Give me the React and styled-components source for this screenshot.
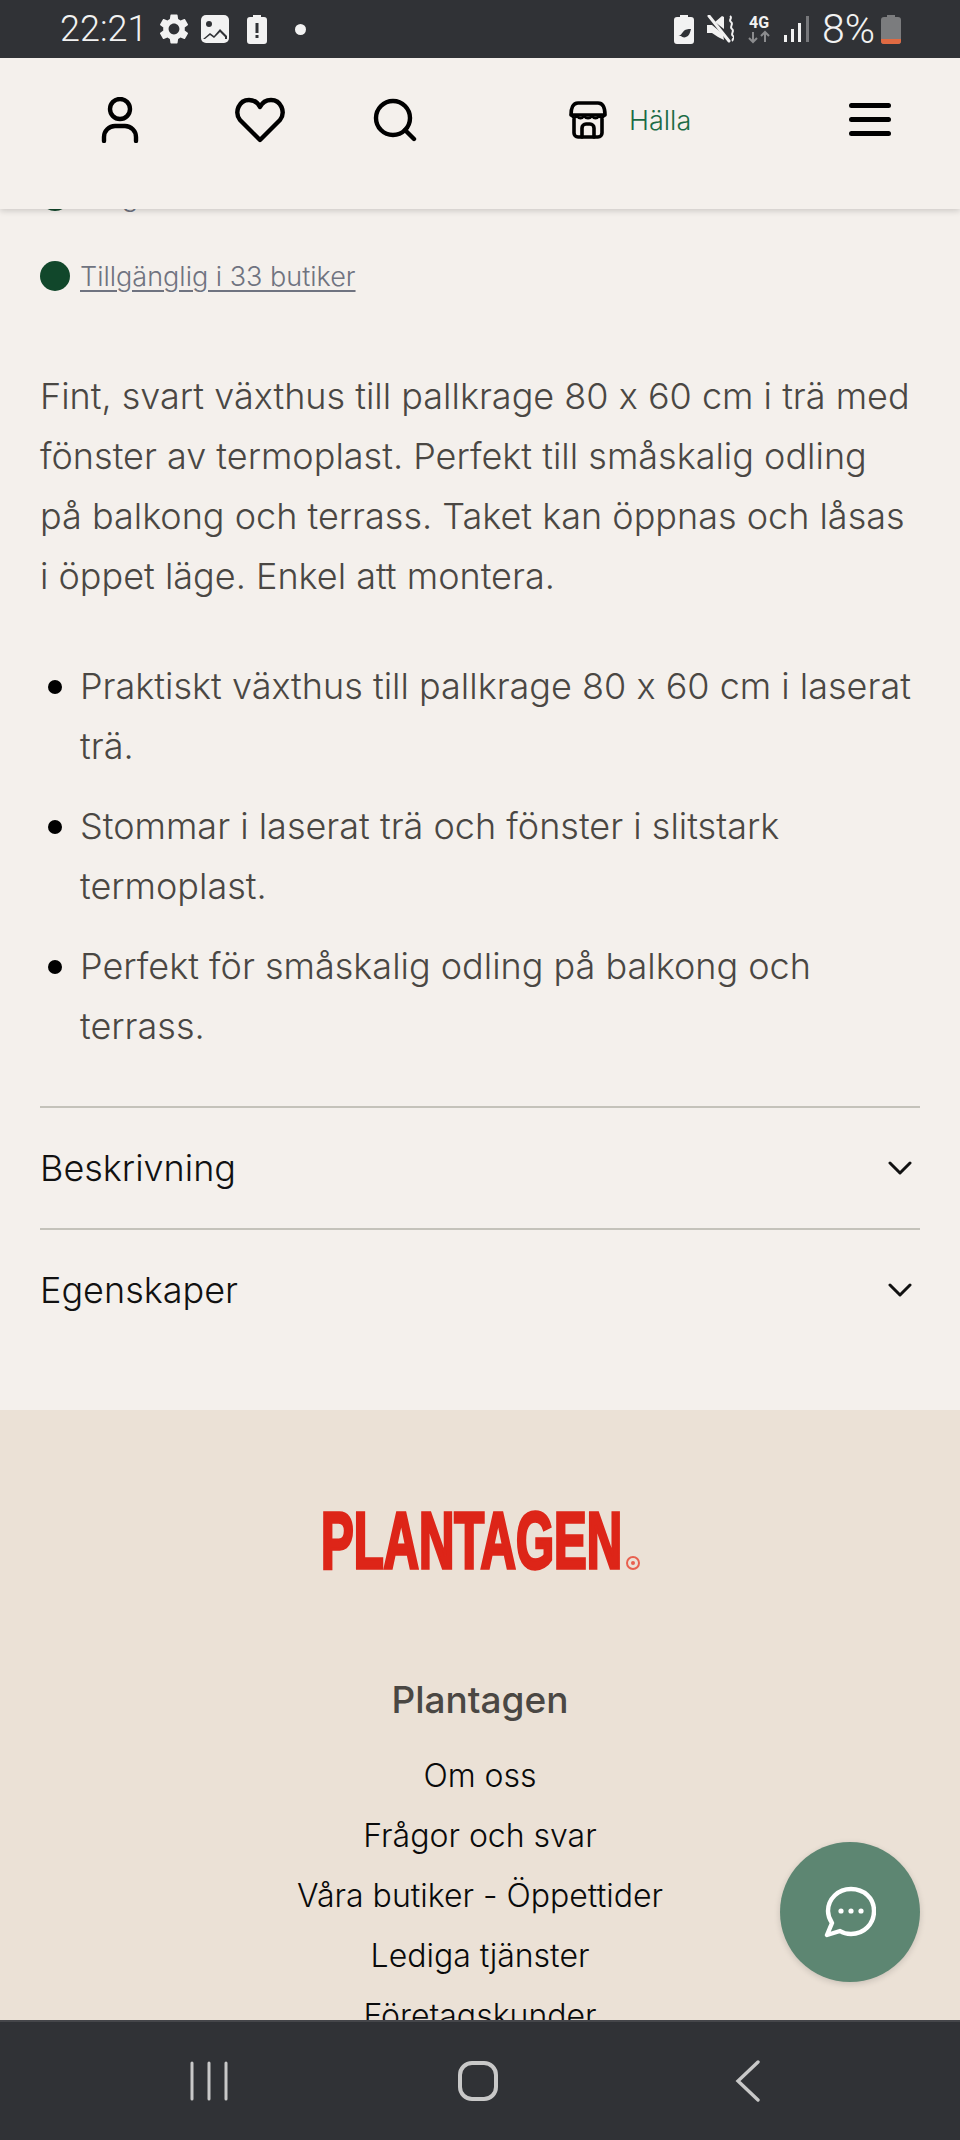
import React from "react";
import styled, { createGlobalStyle } from "styled-components";
import { MdSettings } from "react-icons/md";

const Global = createGlobalStyle`
  html, body { margin: 0; padding: 0; background: #f4f0ec; }
  * { box-sizing: border-box; }
`;
const Page = styled.div`
  position: relative; width: 960px; height: 2140px; overflow: hidden;
  display: flex; flex-direction: column; background: #f4f0ec;
  font-family: Inter, "Noto Sans", sans-serif; font-weight: 300; font-feature-settings: "calt" 0;
`;
const StatusBar = styled.div`
  height: 58px; flex: none; background: #303236; color: #f2f2f2;
  display: flex; align-items: center; justify-content: space-between;
  padding: 0 59px 0 60px; position: relative; z-index: 3;
`;
const StatusGroup = styled.div`display: flex; align-items: center; gap: ${p => p.$gap || 13}px;`;
const StatusText = styled.span`font-family: Roboto, Inter, sans-serif; font-size: ${p => p.$size || 36}px; font-weight: 300; line-height: 58px;`;
const Dot = styled.span`width: 11px; height: 11px; border-radius: 50%; background: #f2f2f2; margin-left: 16px;`;

const Header = styled.header`
  height: 151px; flex: none; background: #f4f0ec; position: relative; z-index: 2;
  box-shadow: 0 2px 6px rgba(0,0,0,.16);
  display: grid; grid-template-columns: 80px 200px 70px 400px 80px;
  padding: 36px 0 0 80px; align-items: start;
`;
const HeaderCell = styled.div`
  height: 52px; display: flex; align-items: center; justify-content: center; color: #000;
`;
const StoreCell = styled(HeaderCell)`justify-content: flex-start; padding-left: 139px; gap: 22px;`;
const StoreName = styled.span`font-size: 27px; color: #1b6b45;`;

const Viewport = styled.main`flex: 1; min-height: 0; overflow: hidden; display: flex; flex-direction: column;`;
const Scrolled = styled.div`margin-top: -28px; padding: 0 40px;`;
const Stock = styled.div`
  display: flex; align-items: center; gap: 10px; height: 30px; margin-bottom: 50px;
  font-size: 27px; color: #6f7380;
`;
const StockDot = styled.span`width: 30px; height: 30px; border-radius: 50%; background: #11472b; flex: none;`;
const StockLabel = styled.span`padding-left: 12px;`;
const StockLink = styled.a`color: inherit; text-decoration: underline; text-underline-offset: 4px; text-decoration-thickness: 2px;`;
const Lead = styled.p`margin: 75px 0 50px; max-width: 876px; font-size: 36px; line-height: 60px; color: #4a4743;`;
const Bullets = styled.ul`margin: 0 0 50px; padding: 0; list-style: none; font-size: 36px; line-height: 60px; color: #4a4743;`;
const Bullet = styled.li`
  display: grid; grid-template-columns: 40px 1fr; margin-bottom: 20px;
  &::before { content: ""; width: 14px; height: 14px; border-radius: 50%; background: #000; margin: 24px 0 0 8px; }
`;
const Row = styled.div`
  height: 122px; border-top: 2px solid #c4c2ba; display: flex; align-items: center;
  justify-content: space-between; font-size: 36px; color: #111; padding-right: 8px;
`;
const Footer = styled.footer`
  margin-top: 60px; flex: 1; background: #ebe1d6; display: flex; flex-direction: column; align-items: center;
  padding-top: 95px; overflow: hidden;
`;
const LogoMark = styled.svg`display: block; flex: none; overflow: visible;`;
const FooterTitle = styled.h3`margin: 95px 0 16px; font-size: 37px; line-height: 60px; font-weight: 500; color: #4a4743;`;
const FooterLink = styled.a`display: block; flex: none; font-size: 32px; line-height: 60px; color: #0a0a0a; white-space: nowrap; text-align: center;`;

const NavBar = styled.nav`
  height: 120px; flex: none; background: #303236; border-top: 2px solid #45464a; position: relative; z-index: 3;
  display: grid; grid-template-columns: 202px 336px 204px; padding: 0 0 0 108px; align-items: center; justify-items: center;
`;
const ChatButton = styled.button`
  position: absolute; left: 780px; top: 1842px; width: 140px; height: 140px; border-radius: 50%;
  border: 0; background: #5d8672; box-shadow: 0 2px 6px rgba(0,0,0,.15); display: flex; align-items: center; justify-content: center;
  padding: 0; z-index: 1;
`;

const Stroke = { fill: "none", stroke: "currentColor", strokeLinecap: "round", strokeLinejoin: "round" };
const Chevron = () => (
  <svg width="24" height="14" viewBox="0 0 24 14" {...Stroke} strokeWidth="3"><path d="M2 2l10 10L22 2" /></svg>
);

const App = () => (
  <Page>
    <Global />
    <StatusBar>
      <StatusGroup $gap={12}>
        <StatusText>22:21</StatusText>
        <MdSettings size={36} style={{ margin: "0 -4px 0 -3px" }} />
        <svg width="30" height="30" viewBox="0 0 30 30"><rect x="1" y="1" width="28" height="28" rx="5" fill="#f2f2f2" /><circle cx="9" cy="10" r="3" fill="#303236" /><path d="M3 25l7-6 4 3 6-7 7 7v3H3z" fill="#303236" /><path d="M5 25l5-4 4 3 6-6 5 5v2z" fill="#f2f2f2" /></svg>
        <svg width="20" height="29" viewBox="0 0 20 29" style={{ marginLeft: 5 }}><path d="M6 0h8v2h3a3 3 0 0 1 3 3v21a3 3 0 0 1-3 3H3a3 3 0 0 1-3-3V5a3 3 0 0 1 3-3h3z" fill="#f2f2f2" /><rect x="8.5" y="8" width="3" height="10" fill="#303236" /><rect x="8.5" y="20" width="3" height="3" fill="#303236" /></svg>
        <Dot />
      </StatusGroup>
      <StatusGroup $gap={13}>
        <svg width="20" height="29" viewBox="0 0 20 29"><path d="M6 0h8v2h3a3 3 0 0 1 3 3v21a3 3 0 0 1-3 3H3a3 3 0 0 1-3-3V5a3 3 0 0 1 3-3h3z" fill="#f2f2f2" /><path d="M3 21c4 0 4-2 6-4 2-3 5-3 8-3-1 4-2 7-5 8-2 1-4 0-5-1" fill="#303236" /></svg>
        <svg width="27" height="28" viewBox="0 0 27 28"><path d="M2 1l20 25" stroke="#f2f2f2" strokeWidth="3" strokeLinecap="round" /><path d="M0 10h5l11 9 1 6-6-3-6-4H0zM8 7l7-6 2 1v12z" fill="#f2f2f2" /><path d="M23 1c3 2-2 4 1 6s-2 5 1 7-2 5 1 7-2 3 0 5" fill="none" stroke="#f2f2f2" strokeWidth="2" /></svg>
        <svg width="24" height="30" viewBox="0 0 24 30"><text x="12" y="14" textAnchor="middle" fontFamily="Roboto, sans-serif" fontWeight="700" fontSize="16" fill="#f2f2f2">4G</text><path d="M6 18v10M2 24l4 4 4-4M18 28V18M14 22l4-4 4 4" fill="none" stroke="#8b8c8e" strokeWidth="2" /></svg>
        <svg width="26" height="28" viewBox="0 0 26 28" style={{ marginRight: -1 }}><rect x="0" y="20" width="3" height="7" fill="#f2f2f2" /><rect x="7" y="14" width="3" height="13" fill="#f2f2f2" /><rect x="14" y="8" width="3" height="19" fill="#f2f2f2" /><rect x="22" y="1" width="3" height="26" fill="#77787b" /></svg>
        <StatusGroup $gap={6}>
          <StatusText $size={41}>8%</StatusText>
          <svg width="20" height="29" viewBox="0 0 20 29"><path d="M6 0h8v2h3a3 3 0 0 1 3 3v21a3 3 0 0 1-3 3H3a3 3 0 0 1-3-3V5a3 3 0 0 1 3-3h3z" fill="#7b7c7e" /><path d="M0 24h20v2a3 3 0 0 1-3 3H3a3 3 0 0 1-3-3z" fill="#e06a42" /></svg>
        </StatusGroup>
      </StatusGroup>
    </StatusBar>
    <Header>
      <HeaderCell>
        <svg width="38" height="46" viewBox="0 0 38 46" {...Stroke} strokeWidth="4.4"><circle cx="19" cy="12" r="10" /><path d="M3 44v-4a11 11 0 0 1 11-11h10a11 11 0 0 1 11 11v4" /></svg>
      </HeaderCell>
      <HeaderCell>
        <svg width="50" height="46" viewBox="0 0 50 46" {...Stroke} strokeWidth="4.4"><path d="M25 43L5 23C-1 15 4 3 14 3c5 0 9 3 11 7 2-4 6-7 11-7 10 0 15 12 9 20z" /></svg>
      </HeaderCell>
      <HeaderCell>
        <svg width="44" height="44" viewBox="0 0 44 44" {...Stroke} strokeWidth="4.4"><circle cx="20" cy="20" r="17" /><path d="M32 32l9 9" /></svg>
      </HeaderCell>
      <StoreCell>
        <svg width="38" height="38" viewBox="0 0 38 38" {...Stroke} strokeWidth="3.6"><path d="M9 2h20c5 0 7 5 7 12H2C2 7 4 2 9 2z" /><path d="M2 14c2 3 5 3 6 1 2 3 5 3 7 0 2 3 6 3 8 0 2 3 5 3 7 0 1 2 4 2 6-1" strokeWidth="2.5" /><path d="M5 18v14a4 4 0 0 0 4 4h20a4 4 0 0 0 4-4V18" /><path d="M13 36v-9a4 4 0 0 1 4-4h4a4 4 0 0 1 4 4v9" /></svg>
        <StoreName>Hälla</StoreName>
      </StoreCell>
      <HeaderCell>
        <svg width="42" height="34" viewBox="0 0 42 34" fill="#000"><rect x="0" y="0" width="42" height="5" rx="2.5" /><rect x="0" y="14" width="42" height="5" rx="2.5" /><rect x="0" y="28" width="42" height="5" rx="2.5" /></svg>
      </HeaderCell>
    </Header>
    <Viewport>
      <Scrolled>
        <Stock><StockDot /><StockLabel>Lagervara</StockLabel></Stock>
        <Stock><StockDot /><StockLink>Tillgänglig i 33 butiker</StockLink></Stock>
        <Lead>Fint, svart växthus till pallkrage 80 x 60 cm i trä med fönster av termoplast. Perfekt till småskalig odling på balkong och terrass. Taket kan öppnas och låsas i öppet läge. Enkel att montera.</Lead>
        <Bullets>
          <Bullet><span>Praktiskt växthus till pallkrage 80 x 60 cm i laserat trä.</span></Bullet>
          <Bullet><span>Stommar i laserat trä och fönster i slitstark termoplast.</span></Bullet>
          <Bullet><span>Perfekt för småskalig odling på balkong och terrass.</span></Bullet>
        </Bullets>
        <Row>Beskrivning<Chevron /></Row>
        <Row>Egenskaper<Chevron /></Row>
      </Scrolled>
      <Footer>
        <LogoMark width="320" height="70" viewBox="0 0 320 70" role="img" aria-label="Plantagen">
          <text x="1" y="63" fontFamily="Liberation Sans, sans-serif" fontWeight="700" fontSize="80" textLength="301" lengthAdjust="spacingAndGlyphs" fill="#dd2518" stroke="#dd2518" strokeWidth="3.5">PLANTAGEN</text>
          <circle cx="313" cy="58" r="6" fill="none" stroke="#e8604f" strokeWidth="2" />
          <circle cx="313" cy="58" r="2" fill="#e8604f" />
        </LogoMark>
        <FooterTitle>Plantagen</FooterTitle>
        <FooterLink>Om oss</FooterLink>
        <FooterLink>Frågor och svar</FooterLink>
        <FooterLink>Våra butiker - Öppettider</FooterLink>
        <FooterLink>Lediga tjänster</FooterLink>
        <FooterLink>Företagskunder</FooterLink>
      </Footer>
    </Viewport>
    <NavBar>
      <svg width="40" height="40" viewBox="0 0 40 40" fill="none" stroke="#c8c8c8" strokeWidth="3" strokeLinecap="round"><path d="M3 2v36M20 2v36M37 2v36" /></svg>
      <svg width="40" height="40" viewBox="0 0 40 40" fill="none" stroke="#c8c8c8" strokeWidth="4"><rect x="2" y="2" width="36" height="36" rx="12" /></svg>
      <svg width="26" height="42" viewBox="0 0 26 42" fill="none" stroke="#c8c8c8" strokeWidth="3.4" strokeLinecap="round"><path d="M23 2L3 21l20 19" /></svg>
    </NavBar>
    <ChatButton aria-label="Chat">
      <svg width="52" height="52" viewBox="0 0 52 52"><path d="M27 3C14 3 4 13 4 25c0 5 2 9 4 12L3 49l13-4c3 2 7 3 11 3 13 0 23-10 23-23S40 3 27 3z" fill="none" stroke="#fff" strokeWidth="4.4" strokeLinejoin="round" /><circle cx="17" cy="25" r="2.6" fill="#fff" /><circle cx="27" cy="25" r="2.6" fill="#fff" /><circle cx="37" cy="25" r="2.6" fill="#fff" /></svg>
    </ChatButton>
  </Page>
);
export default App;
